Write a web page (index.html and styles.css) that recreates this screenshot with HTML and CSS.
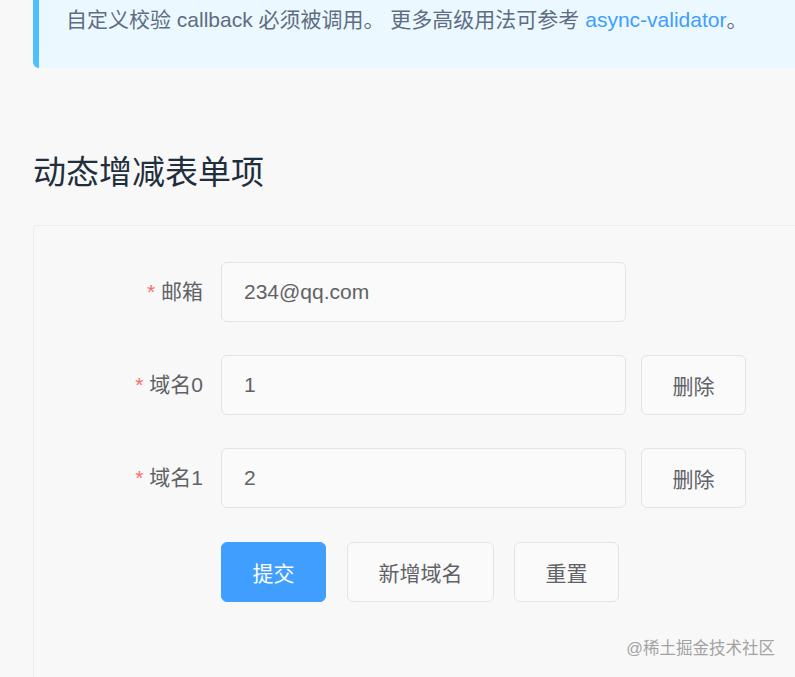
FILE: index.html
```html
<!DOCTYPE html>
<html lang="zh">
<head>
<meta charset="utf-8">
<link rel="stylesheet" href="styles.css">
</head>
<body>
<div class="page">
  <div class="tip">
    <p>自定义校验 callback 必须被调用。 更多高级用法可参考 <a class="link">async-validator</a>。</p>
  </div>
  <h3 class="title">动态增减表单项</h3>
  <div class="demo">
    <div class="form">
      <div class="form-item">
        <label class="label"><span class="star">*</span> 邮箱</label>
        <div class="control">
          <div class="input">234@qq.com</div>
        </div>
      </div>
      <div class="form-item">
        <label class="label"><span class="star">*</span> 域名0</label>
        <div class="control">
          <div class="input">1</div>
          <button class="btn btn-del">删除</button>
        </div>
      </div>
      <div class="form-item item-last">
        <label class="label"><span class="star">*</span> 域名1</label>
        <div class="control">
          <div class="input">2</div>
          <button class="btn btn-del">删除</button>
        </div>
      </div>
      <div class="form-item">
        <div class="label"></div>
        <div class="control actions">
          <button class="btn btn-primary">提交</button>
          <button class="btn btn-add">新增域名</button>
          <button class="btn btn-reset">重置</button>
        </div>
      </div>
    </div>
  </div>
  <div class="watermark">@稀土掘金技术社区</div>
</div>
</body>
</html>
```

FILE: styles.css
```css
* { box-sizing: border-box; }
html, body {
  margin: 0;
  padding: 0;
  background: #f8f8f8;
  overflow: hidden;
}
body {
  width: 795px;
  height: 677px;
  font-family: "Liberation Sans", Arial, "Noto Sans CJK SC", sans-serif;
  color: #606266;
}
.page {
  position: relative;
  height: 677px;
  padding-left: 33px;
}
.tip {
  height: 68px;
  background: #ecf8ff;
  border-left: 6px solid #50bfff;
  border-radius: 0 0 0 6px;
  padding: 3px 0 0 27px;
}
.tip p {
  margin: 0;
  font-size: 21px;
  line-height: 34px;
  color: #5e6d82;
}
.link { color: #409eff; }
.title {
  margin: 82px 0 29px;
  font-size: 33px;
  line-height: 46px;
  font-weight: 400;
  color: #1f2f3d;
}
.demo {
  height: 460px;
  border: 1px solid #ececec;
  border-right: none;
  border-bottom: none;
  border-radius: 4px 0 0 0;
  padding: 36px 0 0 37px;
}
.form-item {
  display: flex;
  margin-bottom: 33px;
  height: 60px;
}
.form-item.item-last { margin-bottom: 34px; }
.label {
  width: 150px;
  flex: none;
  text-align: right;
  padding-right: 18px;
  font-size: 21px;
  line-height: 60px;
  color: #606266;
}
.star { color: #f56c6c; }
.control {
  display: flex;
  align-items: center;
}
.input {
  width: 405px;
  height: 60px;
  border: 1px solid #e3e4e6;
  border-radius: 6px;
  background: #fafafa;
  padding-left: 22px;
  font-size: 21px;
  line-height: 58px;
  color: #606266;
}
.btn {
  height: 60px;
  border: 1px solid #e3e4e6;
  border-radius: 6px;
  background: #fafafa;
  padding: 0;
  font-family: inherit;
  font-size: 21px;
  color: #606266;
  text-align: center;
}
.btn-del {
  width: 105px;
  margin-left: 15px;
}
.actions { gap: 20px; }
.btn-primary {
  width: 105px;
  margin-right: 1px;
  background: #409eff;
  border-color: #409eff;
  color: #fff;
}
.btn-add { width: 147px; }
.btn-reset { width: 105px; }
.watermark {
  position: absolute;
  right: 20px;
  top: 636px;
  font-size: 16.5px;
  line-height: 24px;
  color: #a3a3a3;
}
```
